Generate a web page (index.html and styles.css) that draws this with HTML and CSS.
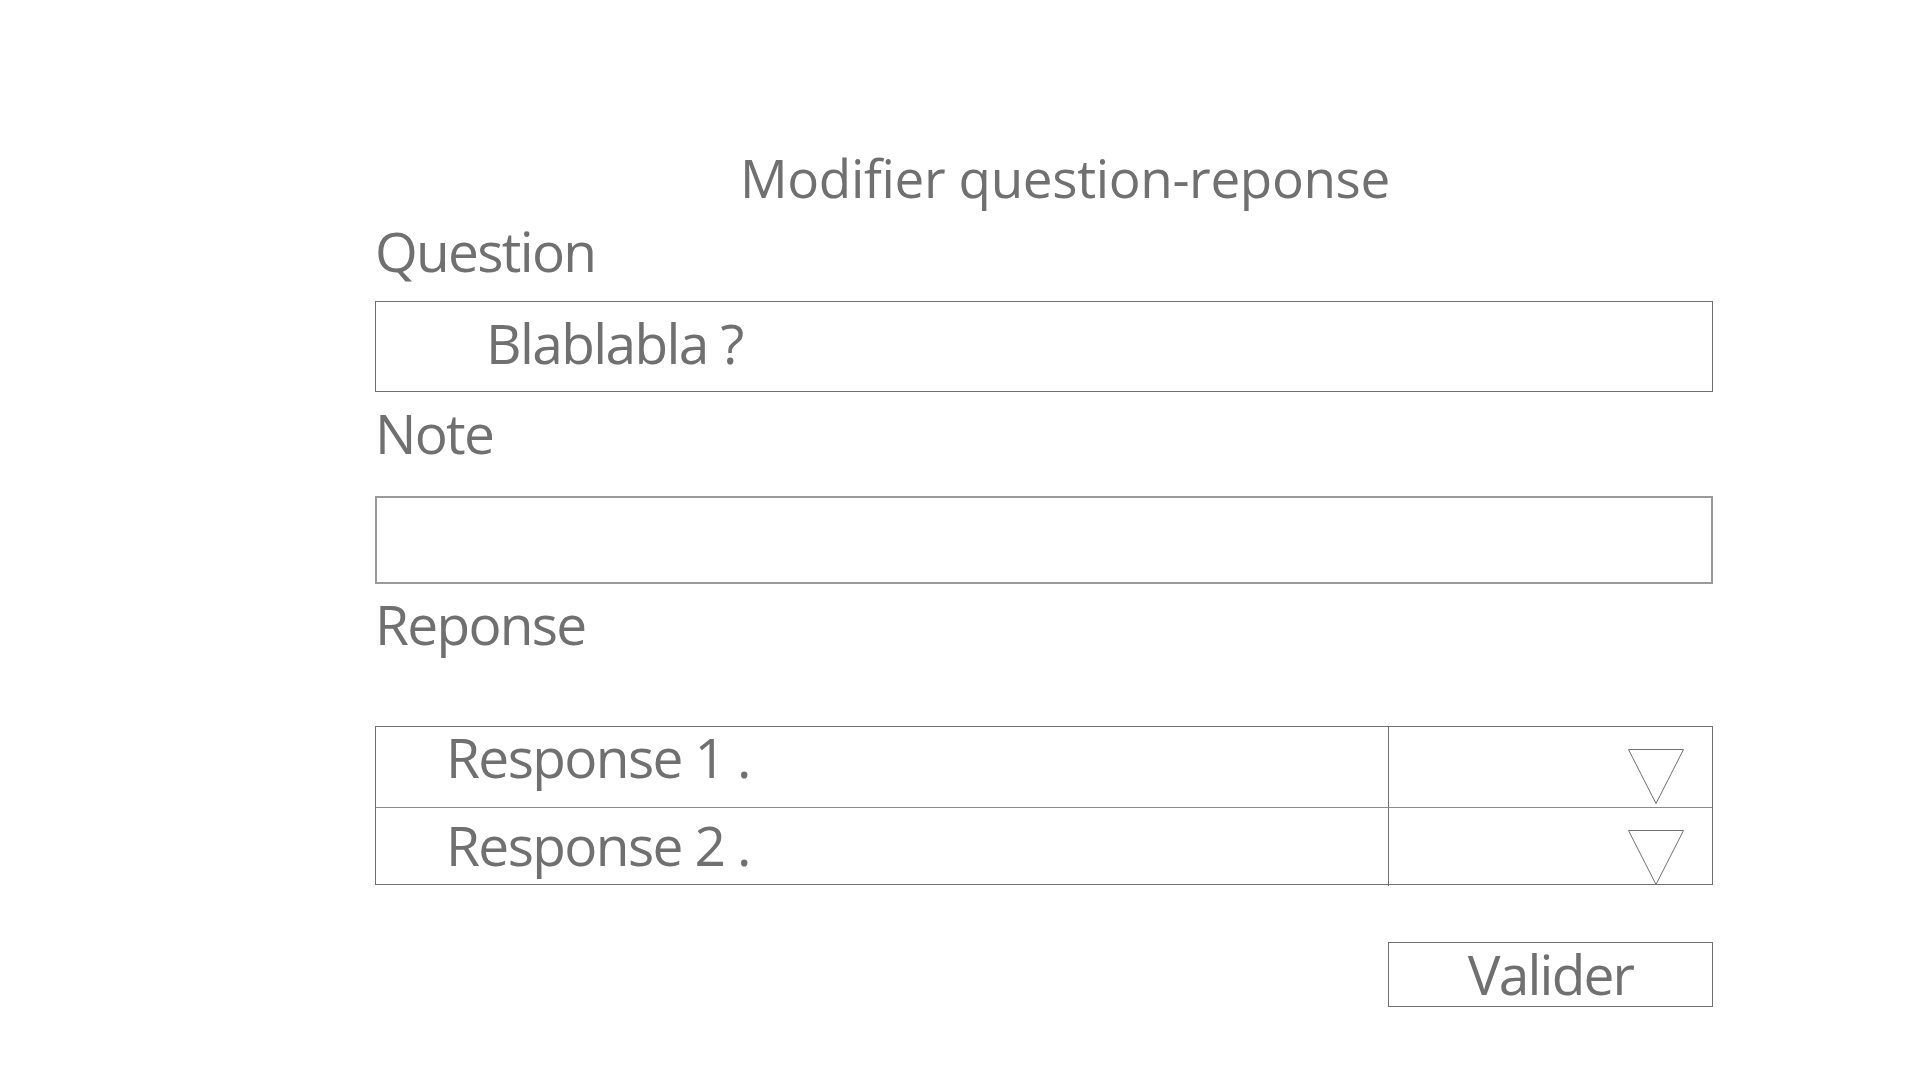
FILE: index.html
```html
<!DOCTYPE html>
<html lang="fr">
<head>
<meta charset="utf-8">
<title>Modifier question-reponse</title>
<link rel="stylesheet" href="styles.css">
</head>
<body>
<main class="page">
  <h1 class="title">Modifier question-reponse</h1>
  <div class="label">Question</div>
  <div class="field field-question">Blablabla ?</div>
  <div class="label label-note">Note</div>
  <div class="field field-note"></div>
  <div class="label label-reponse">Reponse</div>
  <div class="table">
    <div class="row row-first">
      <div class="cell-text">Response 1 .</div>
      <div class="cell-select">
        <svg class="tri" width="56" height="56" viewBox="0 0 56 56"><polygon points="0.5,0.5 55.5,0.5 28,54.5" fill="none" stroke="#707070" stroke-width="1"/></svg>
      </div>
    </div>
    <div class="row row-second">
      <div class="cell-text">Response 2 .</div>
      <div class="cell-select">
        <svg class="tri" width="56" height="56" viewBox="0 0 56 56"><polygon points="0.5,0.5 55.5,0.5 28,54.5" fill="none" stroke="#707070" stroke-width="1"/></svg>
      </div>
    </div>
  </div>
  <div class="actions">
    <button class="btn" type="button">Valider</button>
  </div>
</main>
</body>
</html>
```
FILE: styles.css
```css
html, body {
  margin: 0;
  padding: 0;
  background: #ffffff;
}

body {
  font-family: "Open Sans", "Noto Sans", sans-serif;
  color: #707070;
}

.page {
  width: 1338px;
  margin-left: 375px;
  padding-top: 148px;
}

.title {
  margin: 0;
  padding-left: 365px;
  font-size: 53px;
  font-weight: 400;
  height: 60px;
  line-height: 60px;
  letter-spacing: -0.35px;
  white-space: nowrap;
}

.label {
  font-size: 55px;
  line-height: 60px;
  height: 60px;
  letter-spacing: -1.7px;
  margin-top: 13px;
}

.label-note {
  margin-top: 11px;
}

.label-reponse {
  margin-top: 10px;
}

.field {
  box-sizing: border-box;
  border: 1px solid #707070;
}

.field-question {
  margin-top: 20px;
  height: 91px;
  padding-top: 11px;
  padding-left: 110px;
  font-size: 55px;
  line-height: 60px;
  letter-spacing: -1.6px;
}

.field-note {
  margin-top: 33px;
  height: 88px;
  border: 2px solid #9a9a9a;
}

.table {
  margin-top: 72px;
  border: 1px solid #707070;
}

.row {
  display: grid;
  grid-template-columns: 1012px 1fr;
}

.row-first {
  height: 80px;
}

.row-second {
  height: 77px;
  box-sizing: border-box;
  border-top: 1px solid #8a8a8a;
}

.cell-text {
  font-size: 55px;
  line-height: 60px;
  letter-spacing: -1.6px;
  padding-left: 70px;
}

.row-second .cell-text {
  padding-top: 7px;
}

.cell-select {
  border-left: 1px solid #707070;
  display: flex;
  justify-content: flex-end;
  align-items: flex-start;
  padding-right: 28px;
  padding-top: 22px;
}

.tri {
  display: block;
}

.actions {
  display: flex;
  justify-content: flex-end;
  margin-top: 57px;
}

.btn {
  box-sizing: border-box;
  width: 325px;
  height: 65px;
  border: 1px solid #707070;
  background: #ffffff;
  color: #707070;
  font-family: "Open Sans", "Noto Sans", sans-serif;
  font-size: 55px;
  line-height: 60px;
  letter-spacing: -1.8px;
  padding: 1px 0 0 0;
  margin: 0;
  display: flex;
  justify-content: center;
  align-items: flex-start;
}
```
